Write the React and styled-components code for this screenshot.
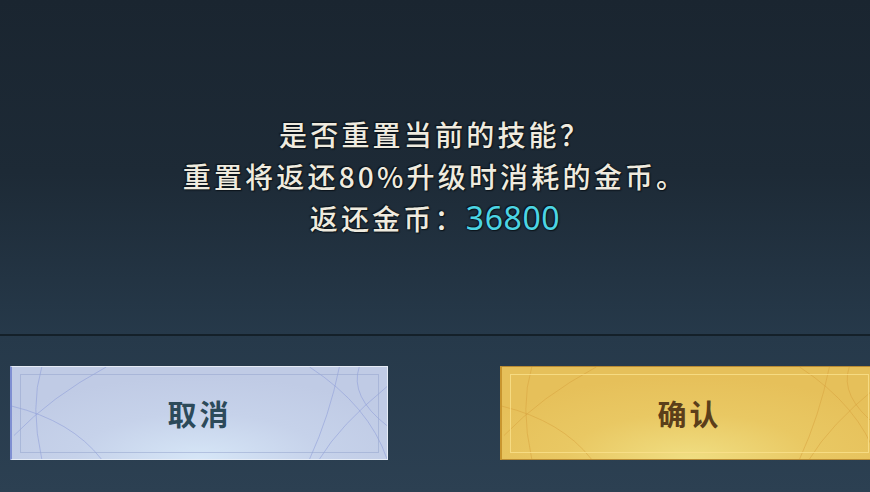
import React from 'react'
import styled, { createGlobalStyle } from 'styled-components'

const GlobalStyle = createGlobalStyle`
  html, body {
    margin: 0;
    padding: 0;
    background: #1b2631;
  }
  body {
    font-family: "Noto Sans CJK SC", "Noto Sans", sans-serif;
  }
`

const Screen = styled.div`
  width: 870px;
  height: 492px;
  overflow: hidden;
  display: flex;
  flex-direction: column;
  background: linear-gradient(180deg, #1a2530 0%, #1d2a36 35%, #26394a 68%, #2c4052 100%);
`
const MessageArea = styled.div`
  height: 336px;
  box-sizing: border-box;
  padding-top: 114px;
  display: flex;
  flex-direction: column;
  align-items: center;
  border-bottom: 2px solid #142029;
`
const Line = styled.div`
  font-size: 28px;
  font-weight: 500;
  line-height: 41.5px;
  letter-spacing: 3.2px;
  color: #efebdf;
  white-space: nowrap;
  text-shadow: 0 0 2px #0d151c, 1px 1px 1px #0d151c, -1px -1px 1px #0d151c;
`
const Amount = styled.span`
  color: #4cd5e4;
  font-family: "Noto Sans", sans-serif;
  font-size: 32px;
  font-weight: 400;
  letter-spacing: 0.6px;
`
const ButtonRow = styled.div`
  display: flex;
  gap: 112px;
  padding: 30px 0 0 10px;
`
const palettes = {
  cancel: {
    fill: 'radial-gradient(ellipse 60% 90% at 50% 100%, #d6e6f7 0%, #c6d2ea 55%, #c0cbe5 100%)',
    edge: '#e6ecf6',
    left: '#7f8fd2',
    frame: 'rgba(150, 165, 205, 0.55)',
    text: '#2c4a5a',
    curve: 'rgba(140, 155, 215, 0.55)',
  },
  confirm: {
    fill: 'radial-gradient(ellipse 60% 90% at 50% 100%, #f0de82 0%, #e9c863 55%, #e6c05a 100%)',
    edge: '#b98b34',
    left: '#c9962f',
    frame: 'rgba(250, 225, 140, 0.8)',
    text: '#5b3e1a',
    curve: 'rgba(215, 160, 60, 0.5)',
  },
}
const Button = styled.button`
  position: relative;
  flex: 0 0 378px;
  height: 94px;
  padding: 0;
  box-sizing: border-box;
  border: 1px solid ${p => palettes[p.$kind].edge};
  border-left: 2px solid ${p => palettes[p.$kind].left};
  background: ${p => palettes[p.$kind].fill};
  font-family: "Noto Sans CJK SC", sans-serif;
  font-size: 29px;
  font-weight: 700;
  letter-spacing: 3px;
  color: ${p => palettes[p.$kind].text};
  display: flex;
  align-items: center;
  justify-content: center;
  overflow: hidden;
  &::after {
    content: '';
    position: absolute;
    inset: 7px 8px 6px 8px;
    border: 1px solid ${p => palettes[p.$kind].frame};
    pointer-events: none;
  }
`
const Curves = styled.svg`
  position: absolute;
  inset: 0;
  width: 100%;
  height: 100%;
  pointer-events: none;
`
const Label = styled.span`
  position: relative;
`

const Decoration = ({ color }) => (
  <Curves viewBox="0 0 378 94" preserveAspectRatio="none">
    <g fill="none" stroke={color} strokeWidth="1">
      <path d="M95 0 Q40 30 2 70" />
      <path d="M30 0 Q18 40 30 94" />
      <path d="M0 40 Q60 55 90 94" />
      <path d="M300 0 Q360 40 378 94" />
      <path d="M330 0 Q320 50 300 94" />
      <path d="M378 20 Q330 60 310 94" />
      <path d="M350 0 Q340 30 378 60" />
    </g>
  </Curves>
)

const DialogButton = ({ kind, children }) => (
  <Button $kind={kind}>
    <Decoration color={palettes[kind].curve} />
    <Label>{children}</Label>
  </Button>
)

export default function App() {
  return (
    <>
      <GlobalStyle />
      <Screen>
        <MessageArea>
          <Line>是否重置当前的技能？</Line>
          <Line>重置将返还80%升级时消耗的金币。</Line>
          <Line>
            返还金币：<Amount>36800</Amount>
          </Line>
        </MessageArea>
        <ButtonRow>
          <DialogButton kind="cancel">取消</DialogButton>
          <DialogButton kind="confirm">确认</DialogButton>
        </ButtonRow>
      </Screen>
    </>
  )
}
